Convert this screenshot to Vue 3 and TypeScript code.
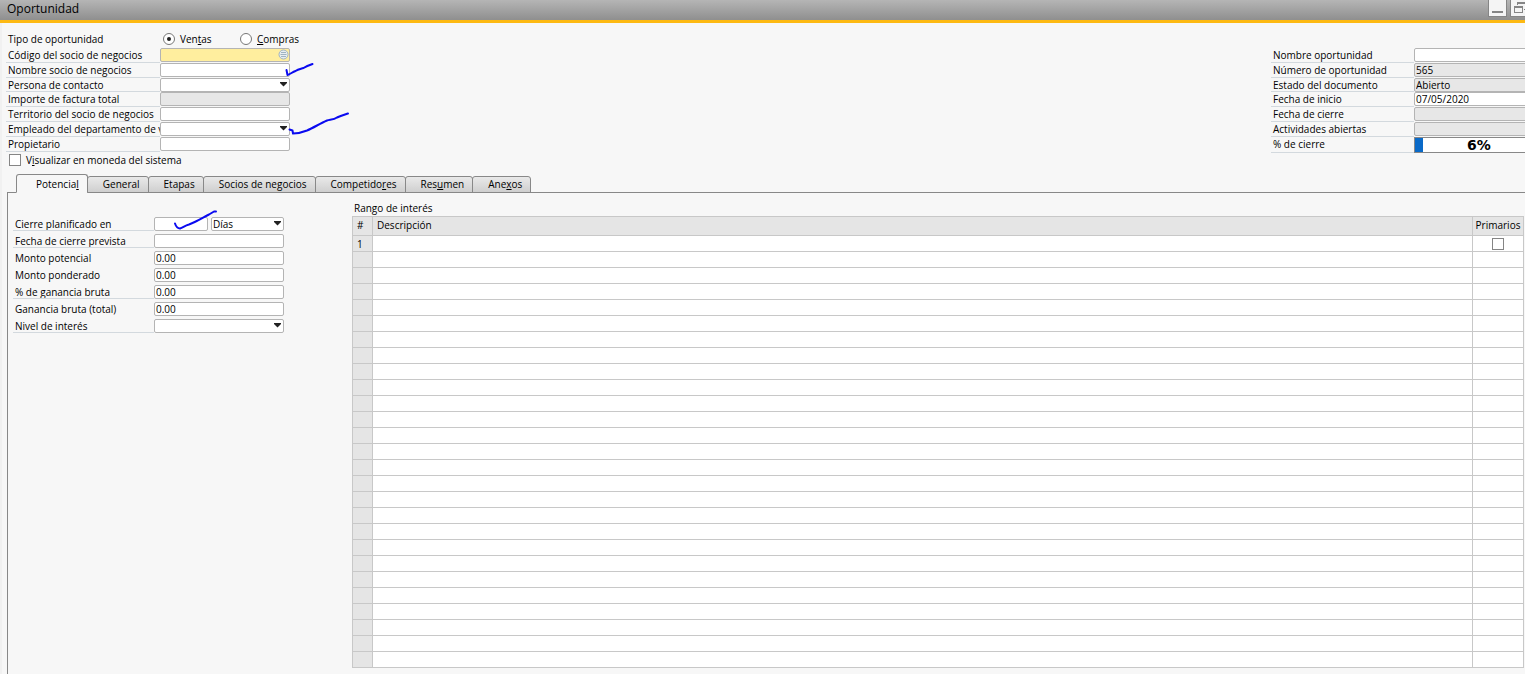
<script setup lang="ts">
import { ref } from 'vue'

interface Field {
  id: string
  label: string
  kind: 'text' | 'select' | 'lookup' | 'progress'
  value?: string
  readonly?: boolean
  line?: boolean
}

interface Tab {
  before: string
  key: string
  after: string
}

const kind = ref('ventas')
const inSystemCurrency = ref(false)
const activeTab = ref(0)
const closing = ref(6)
const unit = ref('Días')
const primary = ref(false)

const partnerFields: Field[] = [
  { id: 'codigo', label: 'Código del socio de negocios', kind: 'lookup' },
  { id: 'nombre', label: 'Nombre socio de negocios', kind: 'text' },
  { id: 'contacto', label: 'Persona de contacto', kind: 'select' },
  { id: 'importe', label: 'Importe de factura total', kind: 'text', readonly: true },
  { id: 'territorio', label: 'Territorio del socio de negocios', kind: 'text' },
  { id: 'empleado', label: 'Empleado del departamento de v', kind: 'select' },
  { id: 'propietario', label: 'Propietario', kind: 'text' },
]

const documentFields: Field[] = [
  { id: 'oportunidad', label: 'Nombre oportunidad', kind: 'text' },
  { id: 'numero', label: 'Número de oportunidad', kind: 'text', value: '565', readonly: true },
  { id: 'estado', label: 'Estado del documento', kind: 'text', value: 'Abierto', readonly: true },
  { id: 'inicio', label: 'Fecha de inicio', kind: 'text', value: '07/05/2020' },
  { id: 'cierre', label: 'Fecha de cierre', kind: 'text', readonly: true },
  { id: 'actividades', label: 'Actividades abiertas', kind: 'text', readonly: true },
  { id: 'porcentaje', label: '% de cierre', kind: 'progress' },
]

const potentialFields: Field[] = [
  { id: 'prevista', label: 'Fecha de cierre prevista', kind: 'text', line: true },
  { id: 'potencial', label: 'Monto potencial', kind: 'text', value: '0.00' },
  { id: 'ponderado', label: 'Monto ponderado', kind: 'text', value: '0.00' },
  { id: 'ganancia', label: '% de ganancia bruta', kind: 'text', value: '0.00', line: true },
  { id: 'total', label: 'Ganancia bruta (total)', kind: 'text', value: '0.00' },
  { id: 'nivel', label: 'Nivel de interés', kind: 'select', line: true },
]

const tabs: Tab[] = [
  { before: 'Potencia', key: 'l', after: '' },
  { before: 'General', key: '', after: '' },
  { before: 'Etapas', key: '', after: '' },
  { before: 'Socios de ne', key: 'g', after: 'ocios' },
  { before: 'Competido', key: 'r', after: 'es' },
  { before: 'Res', key: 'u', after: 'men' },
  { before: 'Ane', key: 'x', after: 'os' },
]

const emptyRows = 26
</script>

<template>
  <main class="window">
    <header class="titlebar">
      <h1>Oportunidad</h1>
      <div class="winbuttons">
        <button type="button" aria-label="Minimizar">
          <svg width="17" height="17" viewBox="0 0 17 17"><path d="M3 12h11" stroke="#858585" stroke-width="2" /></svg>
        </button>
        <button type="button" aria-label="Restaurar">
          <svg width="17" height="17" viewBox="0 0 17 17" fill="none" stroke="#858585">
            <path d="M6.500 5V2.500h9v7H13" /><path d="M6 3h10" stroke-width="2" />
            <rect x="3.500" y="6.500" width="8" height="6" /><path d="M3 7h9" stroke-width="2" />
          </svg>
        </button>
      </div>
    </header>

    <section class="top">
      <div class="partner">
        <div class="kinds" role="radiogroup" aria-labelledby="tipo">
          <span id="tipo" class="kindlabel">Tipo de oportunidad</span>
          <label class="radio"><input v-model="kind" type="radio" name="tipo" value="ventas" /><span>Ven<u>t</u>as</span></label>
          <label class="radio"><input v-model="kind" type="radio" name="tipo" value="compras" /><span><u>C</u>ompras</span></label>
        </div>
        <div class="fields">
          <template v-for="f in partnerFields" :key="f.id">
            <label :for="f.id" class="lined">{{ f.label }}</label>
            <div class="control">
              <select v-if="f.kind === 'select'" :id="f.id"><option></option></select>
              <input v-else :id="f.id" type="text" :readonly="f.readonly" :class="{ lookup: f.kind === 'lookup' }" />
              <svg v-if="f.kind === 'select'" class="arrow" width="8" height="5" viewBox="0 0 8 5"><path d="M0 0h7v1L3.500 4.500 0 1z" fill="#222" /></svg>
              <svg v-if="f.kind === 'lookup'" class="pick" width="11" height="11" viewBox="0 0 11 11" fill="#e8eef0" stroke="#9fb3c2">
                <circle cx="5.500" cy="5.500" r="4.500" /><path d="M3 3.500h5M2.500 5.500h6M3 7.500h5" />
              </svg>
            </div>
          </template>
        </div>
        <label class="check"><input v-model="inSystemCurrency" type="checkbox" /><span>V<u>i</u>sualizar en moneda del sistema</span></label>
      </div>

      <div class="fields document">
        <template v-for="f in documentFields" :key="f.id">
          <label :id="f.id + '-label'" :for="f.id" class="lined">{{ f.label }}</label>
          <div
            v-if="f.kind === 'progress'"
            class="progress"
            role="progressbar"
            :aria-labelledby="f.id + '-label'"
            :aria-valuenow="closing"
          >
            <div class="bar" :style="{ width: closing + '%' }"></div>
            <strong>{{ closing }}%</strong>
          </div>
          <div v-else class="control"><input :id="f.id" type="text" :value="f.value" :readonly="f.readonly" /></div>
        </template>
      </div>
    </section>

    <nav class="tabs" role="tablist">
      <button
        v-for="(t, i) in tabs"
        :key="i"
        type="button"
        role="tab"
        :aria-selected="activeTab === i"
        :class="{ active: activeTab === i }"
        @click="activeTab = i"
      >{{ t.before }}<u v-if="t.key">{{ t.key }}</u>{{ t.after }}</button>
    </nav>

    <section class="panel">
      <div class="potential">
        <label for="planificado" class="lined">Cierre planificado en</label>
        <div class="pair">
          <div class="control"><input id="planificado" type="text" /></div>
          <div class="control">
            <select v-model="unit" aria-label="Unidad de tiempo"><option>Días</option><option>Semanas</option><option>Meses</option></select>
            <svg class="arrow" width="8" height="5" viewBox="0 0 8 5"><path d="M0 0h7v1L3.500 4.500 0 1z" fill="#222" /></svg>
          </div>
        </div>
        <template v-for="f in potentialFields" :key="f.id">
          <label :for="f.id" :class="{ lined: f.line }">{{ f.label }}</label>
          <div class="control">
            <select v-if="f.kind === 'select'" :id="f.id"><option></option></select>
            <input v-else :id="f.id" type="text" :value="f.value" />
            <svg v-if="f.kind === 'select'" class="arrow" width="8" height="5" viewBox="0 0 8 5"><path d="M0 0h7v1L3.500 4.500 0 1z" fill="#222" /></svg>
          </div>
        </template>
      </div>

      <div class="interest">
        <table>
          <caption>Rango de interés</caption>
          <thead>
            <tr><th class="num">#</th><th>Descripción</th><th class="prim">Primarios</th></tr>
          </thead>
          <tbody>
            <tr><td class="num">1</td><td></td><td class="prim"><input v-model="primary" type="checkbox" aria-label="Primario" /></td></tr>
            <tr v-for="n in emptyRows" :key="n"><td class="num"></td><td></td><td></td></tr>
          </tbody>
        </table>
      </div>
    </section>

    <svg class="ink" width="360" height="240" viewBox="0 0 360 240" fill="none" stroke="#0a0af0" stroke-width="2" stroke-linecap="round" stroke-linejoin="round" aria-hidden="true">
      <path d="M286.500 70l1 5c3-1 5-3 8-4 3-2 5-2 8-3 3-2 6-3 9-4" />
      <path d="M289.500 129.500l3 1 .5 3c4 0 9-1 14-3 7-3 13-7 20-10 4-1 7-1 10-3 4-2 8-3 11-4" />
      <path d="M175 223.500c1 3 2 5 5 5 3-1 5-3 9-4 8-3 14-7 20-10l5-3h2" />
    </svg>
  </main>
</template>

<style>
html,
body {
  background: #f7f7f7;
}
</style>

<style scoped>
* {
  box-sizing: border-box;
}

.window {
  position: relative;
  display: flex;
  flex-direction: column;
  min-height: 100vh;
  overflow: hidden;
  background: linear-gradient(to right, #f1f1f1 2px, #f7f7f7 2px);
  color: #000;
  font-family: "Open Sans", "Noto Sans", sans-serif;
  font-size: 10px;
  line-height: 14px;
}

button,
input,
select {
  margin: 0;
  font: inherit;
  color: inherit;
}

u {
  text-underline-offset: 1px;
}

.titlebar {
  display: flex;
  justify-content: space-between;
  height: 23px;
  padding-left: 7px;
  overflow: hidden;
  border-bottom: 3px solid #fdb913;
  background: linear-gradient(#b5b5b5, #8f8f8f);
}

h1 {
  margin: 0;
  font-size: 12px;
  font-weight: 400;
  line-height: 18px;
}

.winbuttons {
  display: flex;
  gap: 3px;
  width: 37px;
}

.winbuttons button {
  flex: none;
  width: 19px;
  height: 17px;
  padding: 0;
  border: 1px solid #858585;
  border-top: 0;
  background: #f4f4f4;
}

.winbuttons svg {
  display: block;
}

.top {
  display: flex;
  justify-content: space-between;
  height: 151px;
  padding: 8px 0 0 6px;
}

.kinds {
  display: flex;
  align-items: flex-start;
  height: 17px;
  padding: 1px 0 0 2px;
}

.kindlabel {
  width: 155px;
}

.radio {
  display: flex;
  align-items: center;
  gap: 5px;
  width: 77px;
}

.radio input {
  flex: none;
  display: grid;
  place-items: center;
  appearance: none;
  width: 12px;
  height: 12px;
  border: 1px solid #777;
  border-radius: 50%;
  background: #fff;
}

.radio input:checked::before {
  content: "";
  width: 4px;
  height: 4px;
  border-radius: 50%;
  background: #222;
}

.fields {
  display: grid;
  grid-template-columns: 154px 130px;
  grid-template-rows: 15px 15px 14px 15px 15px 15px 15px;
}

.fields label,
.potential label {
  padding-left: 2px;
  overflow: hidden;
  white-space: nowrap;
}

.lined {
  border-bottom: 1px solid #d3d9de;
}

.document {
  width: 254px;
  margin-top: 17px;
  overflow: hidden;
  grid-template-columns: 143px 130px;
  grid-template-rows: 15px 15px 14px 15px 15px 15px 16px;
  align-self: flex-start;
}

.control {
  position: relative;
  height: 14px;
}

.control input,
.control select {
  display: block;
  appearance: none;
  width: 100%;
  height: 14px;
  padding: 0 1px;
  border: 1px solid #b4b4b4;
  border-radius: 2px;
  outline: 0;
  background: #fff;
  line-height: 12px;
}

.control input[readonly] {
  background: #e7e7e7;
}

.control input.lookup {
  background: #ffee9e;
}

.arrow {
  position: absolute;
  top: 4px;
  right: 2px;
  pointer-events: none;
}

.pick {
  position: absolute;
  top: 1px;
  right: 1px;
}

.progress {
  position: relative;
  height: 16px;
  border: 1px solid #888;
  background: #fff;
}

.bar {
  height: 100%;
  background: #0a6ac8;
}

.progress strong {
  position: absolute;
  inset: 0;
  font-family: "DejaVu Sans", sans-serif;
  font-size: 14px;
  line-height: 14px;
  text-align: center;
}

.check {
  display: flex;
  align-items: center;
  gap: 5px;
  height: 16px;
  padding-left: 3px;
}

input[type="checkbox"] {
  flex: none;
  appearance: none;
  width: 12px;
  height: 12px;
  border: 1px solid #858585;
  background: #fff;
}

input[type="checkbox"]:checked {
  background: #0a6ac8;
}

.tabs {
  display: flex;
  align-items: flex-end;
  height: 19px;
  padding-left: 16px;
  position: relative;
}

.tabs button {
  height: 17px;
  margin-right: -1px;
  padding: 0 8px 0 15px;
  border: 1px solid #888;
  border-radius: 3px 3px 0 0;
  background: linear-gradient(#e9e9e9, #cfcfcf);
  line-height: 15px;
}

.tabs button.active {
  height: 19px;
  padding-top: 2px;
  padding-left: 19px;
  border-bottom-color: #f7f7f7;
  background: #f7f7f7;
}

.panel {
  display: flex;
  flex: 1;
  align-items: flex-start;
  margin: -1px 0 0 7px;
  padding: 0 1px 6px 5px;
  border-top: 1px solid #888;
  border-left: 1px solid #888;
}

.potential {
  display: grid;
  grid-template-columns: 141px 130px;
  grid-auto-rows: 14px;
  row-gap: 3px;
  width: 339px;
  margin-top: 24px;
  flex: none;
}

.pair {
  display: grid;
  grid-template-columns: 54px 73px;
  gap: 3px;
}

.interest {
  flex: 1;
  padding-top: 8px;
}

table {
  width: 100%;
  table-layout: fixed;
  border-collapse: collapse;
}

caption {
  height: 15px;
  padding-left: 2px;
  line-height: 14px;
  text-align: left;
}

th,
td {
  height: 16px;
  padding: 0 4px;
  border: 1px solid #c8c8c8;
  background: #fff;
  font-weight: 400;
  line-height: 14px;
  text-align: left;
}

th {
  height: 19px;
  padding-bottom: 3px;
  background: #e5e5e5;
}

.num {
  width: 20px;
  background: #e5e5e5;
}

.prim {
  width: 51px;
  padding-right: 0;
  padding-left: 0;
  text-align: center;
}

.prim input {
  display: block;
  margin: 0 auto;
}

.ink {
  position: absolute;
  top: 0;
  left: 0;
  pointer-events: none;
}
</style>
